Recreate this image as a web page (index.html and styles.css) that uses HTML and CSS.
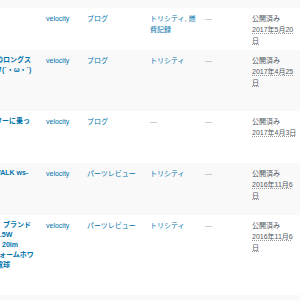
FILE: index.html
```html
<!DOCTYPE html>
<html lang="ja">
<head>
<meta charset="utf-8">
<link rel="stylesheet" href="styles.css">
</head>
<body>
<table class="posts">
  <colgroup>
    <col class="c-title"><col class="c-author"><col class="c-cat"><col class="c-tags"><col class="c-com"><col class="c-date">
  </colgroup>
  <tbody>
    <tr class="alt r-stub"><td></td><td></td><td></td><td></td><td></td><td></td></tr>
    <tr class="r-a">
      <td class="title"></td>
      <td><a>velocity</a></td>
      <td><a>ブログ</a></td>
      <td><a>トリシティ</a>, <a>燃費記録</a></td>
      <td class="com">—</td>
      <td class="date">公開済み<br><abbr>2017年5月20日</abbr></td>
    </tr>
    <tr class="alt r-b">
      <td class="title"><a><span class="ln m4">のロングス</span><span class="ln m5">タ(´・ω・`)</span></a></td>
      <td><a>velocity</a></td>
      <td><a>ブログ</a></td>
      <td><a>トリシティ</a></td>
      <td class="com">—</td>
      <td class="date">公開済み<br><abbr>2017年4月25日</abbr></td>
    </tr>
    <tr class="r-c">
      <td class="title"><a><span class="ln m5">ターに乗っ</span></a></td>
      <td><a>velocity</a></td>
      <td><a>ブログ</a></td>
      <td class="com">—</td>
      <td class="com">—</td>
      <td class="date">公開済み<br><abbr>2017年4月3日</abbr></td>
    </tr>
    <tr class="alt r-d">
      <td class="title"><a><span class="ln m6">WALK ws-</span></a></td>
      <td><a>velocity</a></td>
      <td><a>パーツレビュー</a></td>
      <td><a>トリシティ</a></td>
      <td class="com">—</td>
      <td class="date">公開済み<br><abbr>2016年11月6日</abbr></td>
    </tr>
    <tr class="r-e">
      <td class="title"><a><span class="ln p3">ブランド</span><span class="ln m4">1.5W</span><span class="ln p2">20lm</span><span class="ln m8">フォームホワ</span><span class="ln m4">電球</span></a></td>
      <td><a>velocity</a></td>
      <td><a>パーツレビュー</a></td>
      <td><a>トリシティ</a></td>
      <td class="com">—</td>
      <td class="date">公開済み<br><abbr>2016年11月6日</abbr></td>
    </tr>
    <tr class="alt r-f"><td></td><td></td><td></td><td></td><td></td><td></td></tr>
  </tbody>
</table>
</body>
</html>
```
FILE: styles.css
```css
html, body {
  margin: 0;
  padding: 0;
  background: #fff;
  overflow: hidden;
}
body {
  width: 300px;
  height: 300px;
  font-family: "Liberation Sans", "Noto Sans CJK JP", sans-serif;
  font-size: 7px;
  line-height: 11px;
  color: #50575e;
}
.posts {
  table-layout: fixed;
  border-collapse: collapse;
  border-spacing: 0;
  width: 301px;
}
.c-title { width: 41px; }
.c-author { width: 41px; }
.c-cat { width: 63px; }
.c-tags { width: 55px; }
.c-com { width: 47px; }
.c-date { width: 54px; }
.posts td {
  padding: 4.5px 5px 0;
  vertical-align: top;
  overflow: hidden;
}
.posts tr.alt { background: #f9f9f9; }
.r-stub { height: 8px; }
.r-a { height: 42px; }
.r-b { height: 61px; }
.r-c { height: 52px; }
.r-d { height: 52px; }
.r-e { height: 80px; }
.r-f { height: 10px; }
.r-stub td, .r-f td { padding: 0; }
a { color: #0073aa; }
.posts td.title {
  padding: 5px 0 0 0;
  font-weight: bold;
  line-height: 10px;
}
.title a { color: #0073aa; }
.ln {
  display: block;
  white-space: nowrap;
}
.m4 { margin-left: -4px; }
.m5 { margin-left: -5px; }
.m6 { margin-left: -6px; }
.m8 { margin-left: -8px; }
.p2 { margin-left: 2px; }
.p3 { margin-left: 3px; }
.posts td:nth-child(4) { padding-right: 2px; }
.com { color: #a0a5aa; }
.date abbr {
  text-decoration: underline dotted #999;
  text-underline-offset: 1px;
}
.posts td.date { padding-right: 3px; }
```
